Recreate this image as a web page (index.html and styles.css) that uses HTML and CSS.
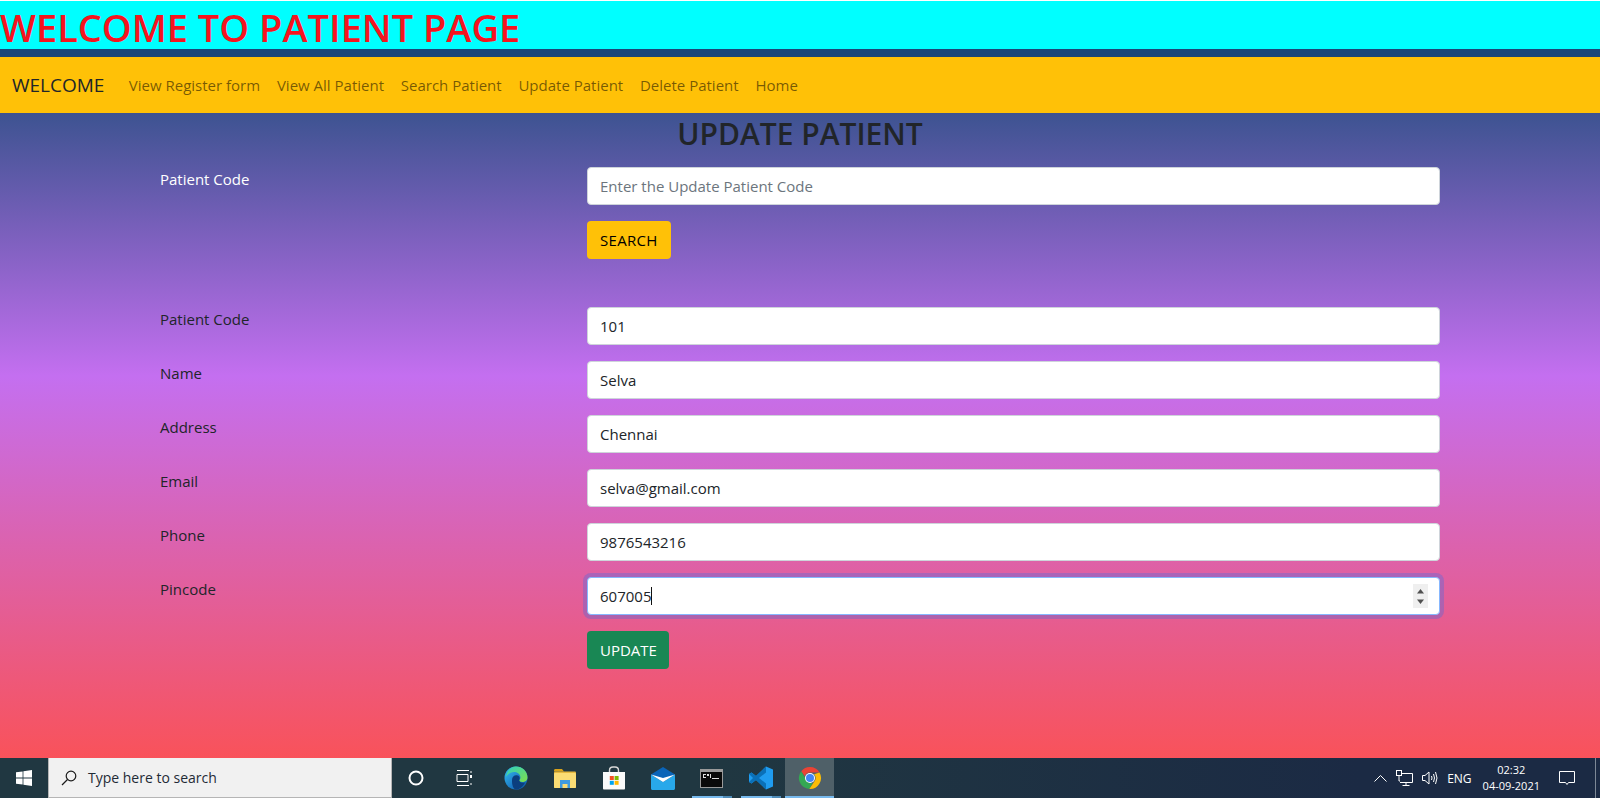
FILE: index.html
```html
<!DOCTYPE html>
<html lang="en">
<head>
    <meta charset="UTF-8">
    <meta name="viewport" content="width=device-width, initial-scale=1.0">
    <title>Update Patient</title>
    <link rel="stylesheet" href="styles.css">
</head>
<body>
    <div class="page-title">WELCOME TO PATIENT PAGE</div>

    <nav class="navbar">
        <span class="brand">WELCOME</span>
        <a href="#">View Register form</a>
        <a href="#">View All Patient</a>
        <a href="#">Search Patient</a>
        <a href="#">Update Patient</a>
        <a href="#">Delete Patient</a>
        <a href="#">Home</a>
    </nav>

    <main class="content">
        <h2>UPDATE PATIENT</h2>

        <!-- search by code -->
        <form class="form-grid search-form">
            <label class="light">Patient Code</label>
            <input type="text" class="field" placeholder="Enter the Update Patient Code">
            <span></span>
            <div><button type="button" class="btn btn-search">SEARCH</button></div>
        </form>

        <!-- update fields -->
        <form class="form-grid">
            <label>Patient Code</label>
            <input type="text" class="field" value="101">
            <label>Name</label>
            <input type="text" class="field" value="Selva">
            <label>Address</label>
            <input type="text" class="field" value="Chennai">
            <label>Email</label>
            <input type="text" class="field" value="selva@gmail.com">
            <label>Phone</label>
            <input type="text" class="field" value="9876543216">
            <label>Pincode</label>
            <div class="field focused">
                <span>607005</span><i class="caret"></i>
                <svg class="spinner" width="15" height="24" viewBox="0 0 15 24">
                    <rect width="15" height="24" fill="#efefef"/>
                    <path d="M7.5 5 11 9.500H4z" fill="#505050"/>
                    <path d="M7.500 20 11 15.500H4z" fill="#505050"/>
                </svg>
            </div>
            <span></span>
            <div><button type="button" class="btn btn-update">UPDATE</button></div>
        </form>
    </main>

    <footer class="taskbar">
        <div class="start">
            <svg width="16" height="16" viewBox="0 0 16 16"><path d="M0 2.3 6.6 1.4V7.5H0zM7.4 1.3 16 0V7.5H7.4zM0 8.4H6.6V14.6L0 13.7zM7.4 8.4H16V16L7.4 14.7z" fill="#fff"/></svg>
        </div>
        <div class="search-box">
            <svg width="16" height="16" viewBox="0 0 16 16" fill="none" stroke="#1a1a1a" stroke-width="1.2"><circle cx="10" cy="6" r="4.8"/><path d="M6.5 9.5 1 15"/></svg>
            <span>Type here to search</span>
        </div>
        <div class="task-icon">
            <svg width="16" height="16" viewBox="0 0 16 16"><circle cx="8" cy="8" r="6.5" fill="none" stroke="#fff" stroke-width="2"/></svg>
        </div>
        <div class="task-icon">
            <svg width="16" height="16" viewBox="0 0 16 16" fill="none" stroke="#fff" stroke-width="1"><path d="M1 .5H13M1 15.500H13M1 4.500H12V11.500H1zM15 1V3M15 13V15"/><rect x="14" y="5" width="2" height="3" fill="#fff" stroke="none"/></svg>
        </div>
        <div class="task-icon pinned first-pinned">
            <svg width="24" height="24" viewBox="0 0 24 24">
                <defs>
                    <linearGradient id="edgeA" x1="0" y1="0" x2="1" y2="1"><stop offset="0" stop-color="#35c1f1"/><stop offset=".6" stop-color="#1b78c4"/><stop offset="1" stop-color="#0c59a4"/></linearGradient>
                    <linearGradient id="edgeB" x1="0" y1="0" x2="1" y2="1"><stop offset="0" stop-color="#2fd0c0"/><stop offset="1" stop-color="#7fe04a"/></linearGradient>
                </defs>
                <circle cx="12" cy="12" r="11.5" fill="url(#edgeA)"/>
                <path d="M12 .5C18 .5 23.500 5 23.500 11.500 23.500 14.500 21 16 18.500 16 16.500 16 15 15.400 14.600 14.600 16 13.600 16.600 12.600 16.400 11 16 7.800 13 6 10 6 6.500 6 4 8 2 11 3 4.500 7 .5 12 .5Z" fill="url(#edgeB)"/>
                <path d="M8 14C8 10.500 10.500 8.800 13 9.200 15.500 9.600 16 11.600 15.600 13 14.400 16 18 17.600 21 16.400 19 21 15 23.500 12 23.500 9 23.500 7.800 18 8 14Z" fill="#0b3f7e"/>
            </svg>
        </div>
        <div class="task-icon pinned">
            <svg width="22" height="19" viewBox="0 0 22 19">
                <path d="M0 1.500C0 .7.600 0 1.400 0H8L10 2.500H0Z" fill="#d9a21b"/>
                <rect y="2.500" width="22" height="16.500" rx="1" fill="#e8b93e"/>
                <rect y="4" width="22" height="15" rx="1" fill="#fbdc74"/>
                <path d="M6 11H16V19H13.500V15H8.500V19H6Z" fill="#3f9be0"/>
            </svg>
        </div>
        <div class="task-icon pinned">
            <svg width="24" height="24" viewBox="0 0 24 24">
                <path d="M7.500 7V4.500C7.500 2.500 9 1 11 1H13C15 1 16.500 2.500 16.500 4.500V7" fill="none" stroke="#d8d8d8" stroke-width="1.400"/>
                <path d="M1 6H23V22.500C23 23 22.500 23.500 22 23.500H2C1.500 23.500 1 23 1 22.500Z" fill="#fafafa"/>
                <rect x="7.800" y="10" width="4" height="4" fill="#f25022"/>
                <rect x="12.600" y="10" width="4" height="4" fill="#7fba00"/>
                <rect x="7.800" y="14.800" width="4" height="4" fill="#00a4ef"/>
                <rect x="12.600" y="14.800" width="4" height="4" fill="#ffb900"/>
            </svg>
        </div>
        <div class="task-icon pinned">
            <svg width="24" height="23" viewBox="0 0 24 23">
                <path d="M0 7.500 12 0 24 7.500 12 15Z" fill="#0a64b8"/>
                <path d="M0 7.500 12 15 24 7.500V21.500C24 22.300 23.300 23 22.500 23H1.500C.7 23 0 22.300 0 21.500Z" fill="#28a8ea"/>
                <path d="M0 7.500 12 15 24 7.500 12 11Z" fill="#fff"/>
            </svg>
        </div>
        <div class="task-icon pinned open">
            <svg width="23" height="19" viewBox="0 0 23 19">
                <rect width="23" height="19" fill="#9a9a9a"/>
                <rect x="1" y="3" width="21" height="15" fill="#0a0a0a"/>
                <path d="M3 5H6V6H3zM3 6H4V8H3zM3 8H6V9H3zM7 5H9V7H7zM10 5H11V9H10zM12 9H19V10H12z" fill="#ddd"/>
            </svg>
        </div>
        <div class="task-icon pinned open">
            <svg width="24" height="24" viewBox="0 0 24 24">
                <path d="M17 .5 24 3.500V20.500L17 23.500 7 14 2.500 17.500 0 16V8L2.500 6.500 7 10Z" fill="#1f9cf0"/>
                <path d="M17 .5V6.500L10 12 17 17.500V23.500L7 14 2.500 17.500 0 16 4 12 0 8 2.500 6.500 7 10Z" fill="#0a70b8"/>
            </svg>
        </div>
        <div class="task-icon pinned active">
            <svg width="24" height="24" viewBox="0 0 24 24">
                <path d="M12 1A11 11 0 0 1 21.500 6.500H12A5.500 5.500 0 0 0 6.800 10.200L3.200 5.300A11 11 0 0 1 12 1Z" fill="#ea4335"/>
                <path d="M3.200 5.300 8 13.600A5.500 5.500 0 0 0 14.800 16.800L11.300 23A11 11 0 0 1 3.200 5.300Z" fill="#34a853"/>
                <path d="M21.500 6.500A11 11 0 0 1 11.300 23L16.800 14.800A5.500 5.500 0 0 0 16.100 8.300Z" fill="#fbbc05"/>
                <circle cx="12" cy="12" r="5" fill="#fff"/>
                <circle cx="12" cy="12" r="4" fill="#4285f4"/>
            </svg>
        </div>
        <div class="tray">
            <svg width="13" height="8" viewBox="0 0 13 8" fill="none" stroke="#fff"><path d="M.5 7.500 6.500 1.500 12.500 7.500"/></svg>
            <svg width="17" height="16" viewBox="0 0 17 16" fill="none" stroke="#fff"><path d="M4 3.500H16.500V12.500H4M10 12.500V15M6.500 15.500H13.500"/><rect x=".5" y=".5" width="5" height="5" fill="#1b2a44"/><path d="M3 6V11H4"/></svg>
            <svg width="17" height="14" viewBox="0 0 17 14" fill="none" stroke="#fff"><path d="M.5 4.500H3L7 1V13L3 9.500H.5ZM9.500 5Q10.500 7 9.500 9M11.500 3Q13.500 7 11.500 11M13.500 1Q16.500 7 13.500 13"/></svg>
            <span class="lang">ENG</span>
            <div class="clock"><span>02:32</span><span>04-09-2021</span></div>
            <svg class="notify" width="16" height="15" viewBox="0 0 16 15" fill="none" stroke="#fff"><path d="M.5.500H15.500V11.500H9.500L8 13.500 6.500 11.500H.5Z"/></svg>
            <i class="show-desktop"></i>
        </div>
    </footer>
</body>
</html>
```

FILE: styles.css
```css
* {
    box-sizing: border-box;
}
body {
    margin: 0;
    height: 798px;
    overflow: hidden;
    display: flex;
    flex-direction: column;
    font-family: "Open Sans", sans-serif;
    font-size: 15px;
    color: #212529;
    background-color: #fff;
}
.page-title {
    flex: none;
    margin-top: 1px;
    height: 48px;
    background-color: #00ffff;
    color: #f5141e;
    font-size: 38px;
    font-weight: 600;
    line-height: 52px;
    white-space: nowrap;
}
.navbar {
    flex: none;
    height: 64px;
    border-top: 8px solid #1b4678;
    background-color: #ffc107;
    display: flex;
    align-items: center;
    padding: 0 12px;
}
.navbar .brand {
    font-size: 19px;
    color: #212529;
    margin-right: 16px;
}
.navbar a {
    color: rgba(0, 0, 0, .55);
    text-decoration: none;
    padding: 0 8.400px;
}
.content {
    flex: 1;
    padding-left: 160px;
    padding-right: 160px;
    background: linear-gradient(180deg, #3d5391 0%, #c46ff0 40.800%, #f9525a 100%);
}
.content h2 {
    margin: 0 0 14px;
    text-align: center;
    font-size: 30px;
    font-weight: 600;
    line-height: 42px;
}
.form-grid {
    display: grid;
    grid-template-columns: 427px 853px;
    row-gap: 16px;
}
.search-form {
    margin-top: -2px;
    margin-bottom: 48px;
}
.form-grid label {
    line-height: 24px;
}
.form-grid label.light {
    color: #fff;
}
.field {
    height: 38px;
    width: 100%;
    padding: 0 12px;
    border: 1px solid #ced4da;
    border-radius: 4px;
    background: #fff;
    font: inherit;
    color: #212529;
    display: flex;
    align-items: center;
}
.field::placeholder {
    color: #6c757d;
}
.field.focused {
    border-color: #86b7fe;
    box-shadow: 0 0 0 4px rgba(13, 110, 253, .25);
}
.caret {
    width: 1px;
    height: 18px;
    background: #111;
}
.spinner {
    margin-left: auto;
    margin-right: -1px;
}
.btn {
    height: 38px;
    padding: 0 12px;
    border: 1px solid transparent;
    border-radius: 4px;
    font: inherit;
}
.btn-search {
    background-color: #ffc107;
    color: #000;
    letter-spacing: .3px;
}
.btn-update {
    background-color: #198754;
    color: #fff;
    padding-right: 11px;
}
.taskbar {
    flex: none;
    height: 40px;
    display: flex;
    align-items: center;
    background: linear-gradient(90deg, #203741 0%, #203741 45%, #1b2a44 85%);
    color: #fff;
}
.start {
    width: 48px;
    display: flex;
    justify-content: center;
}
.search-box {
    width: 344px;
    height: 40px;
    padding-left: 12px;
    display: flex;
    align-items: center;
    gap: 11px;
    background-color: #f1f1f1;
    border: 1px solid #b5b5b5;
    border-width: 0 1px 1px;
    color: #1f2b36;
    font-size: 14px;
}
.task-icon {
    position: relative;
    flex: none;
    width: 48px;
    height: 40px;
    display: flex;
    align-items: center;
    justify-content: center;
}
.task-icon.pinned {
    width: 49px;
}
.task-icon.first-pinned {
    margin-left: 3px;
}
/* running app underline sits over the bottom of the tile */
.task-icon.open::after,
.task-icon.active::after {
    content: "";
    position: absolute;
    left: 5px;
    right: 4px;
    bottom: 0;
    height: 2px;
    background: linear-gradient(90deg, #76b9ed 77%, #4f8cb8 77%);
}
.task-icon.active::after {
    left: 0;
    right: 0;
    background: #76b9ed;
}
.task-icon.active {
    background-color: #4f6068;
}
.tray {
    margin-left: auto;
    display: flex;
    align-items: center;
    gap: 9px;
    height: 40px;
}
.lang {
    font-size: 12px;
    margin-left: -1px;
}
.clock {
    display: flex;
    flex-direction: column;
    align-items: center;
    font-size: 11px;
    line-height: 16px;
    margin-left: 2px;
    margin-right: 10px;
}
.notify {
    margin-right: 11px;
}
.show-desktop {
    width: 1px;
    height: 40px;
    background: #7d8896;
    margin-right: 4px;
}
```
